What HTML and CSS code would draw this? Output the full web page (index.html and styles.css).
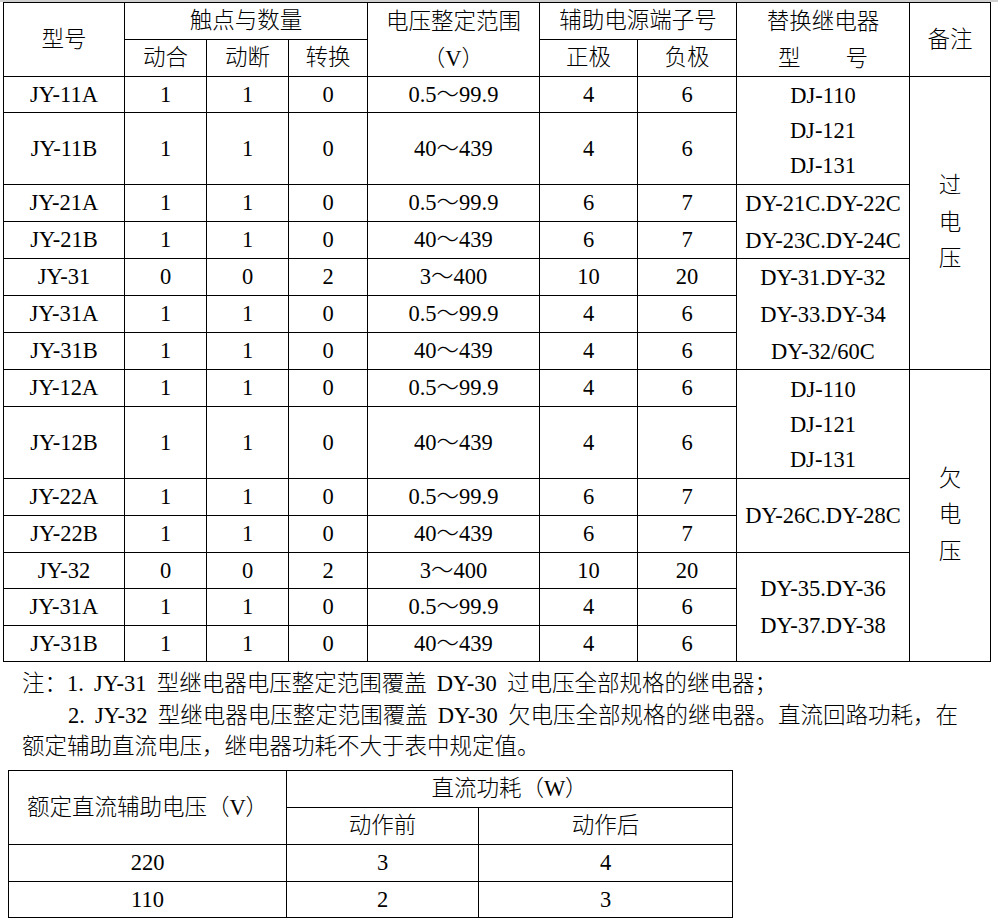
FILE: index.html
```html
<!DOCTYPE html>
<html lang="zh-CN">
<head>
<meta charset="utf-8">
<title>JY 系列电压继电器规格</title>
<link rel="stylesheet" href="styles.css">
</head>
<body>
<div class="topbar"></div>
<div class="spec">
  <div class="r2">型号</div>
  <div class="c3">触点与数量</div>
  <div class="r2 two">电压整定范围<br>（V）</div>
  <div class="c2">辅助电源端子号</div>
  <div class="r2 two">替换继电器<br>型　　号</div>
  <div class="r2">备注</div>

  <div>动合</div><div>动断</div><div>转换</div><div>正极</div><div>负极</div>

  <div>JY-11A</div><div>1</div><div>1</div><div>0</div><div>0.5～99.9</div><div>4</div><div>6</div>
  <div class="r3 dj">DJ-110<br>DJ-121<br>DJ-131</div>
  <div class="r8 remark">过<br>电<br>压</div>

  <div class="r2">JY-11B</div><div class="r2">1</div><div class="r2">1</div><div class="r2">0</div><div class="r2">40～439</div><div class="r2">4</div><div class="r2">6</div>

  <div>JY-21A</div><div>1</div><div>1</div><div>0</div><div>0.5～99.9</div><div>6</div><div>7</div>
  <div class="r2 dy">DY-21C.DY-22C<br>DY-23C.DY-24C</div>
  <div>JY-21B</div><div>1</div><div>1</div><div>0</div><div>40～439</div><div>6</div><div>7</div>

  <div>JY-31</div><div>0</div><div>0</div><div>2</div><div>3～400</div><div>10</div><div>20</div>
  <div class="r3 dy">DY-31.DY-32<br>DY-33.DY-34<br>DY-32/60C</div>
  <div>JY-31A</div><div>1</div><div>1</div><div>0</div><div>0.5～99.9</div><div>4</div><div>6</div>
  <div>JY-31B</div><div>1</div><div>1</div><div>0</div><div>40～439</div><div>4</div><div>6</div>

  <div>JY-12A</div><div>1</div><div>1</div><div>0</div><div>0.5～99.9</div><div>4</div><div>6</div>
  <div class="r3 dj">DJ-110<br>DJ-121<br>DJ-131</div>
  <div class="r8 remark">欠<br>电<br>压</div>

  <div class="r2">JY-12B</div><div class="r2">1</div><div class="r2">1</div><div class="r2">0</div><div class="r2">40～439</div><div class="r2">4</div><div class="r2">6</div>

  <div>JY-22A</div><div>1</div><div>1</div><div>0</div><div>0.5～99.9</div><div>6</div><div>7</div>
  <div class="r2">DY-26C.DY-28C</div>
  <div>JY-22B</div><div>1</div><div>1</div><div>0</div><div>40～439</div><div>6</div><div>7</div>

  <div>JY-32</div><div>0</div><div>0</div><div>2</div><div>3～400</div><div>10</div><div>20</div>
  <div class="r3 dy">DY-35.DY-36<br>DY-37.DY-38</div>
  <div>JY-31A</div><div>1</div><div>1</div><div>0</div><div>0.5～99.9</div><div>4</div><div>6</div>
  <div>JY-31B</div><div>1</div><div>1</div><div>0</div><div>40～439</div><div>4</div><div>6</div>
</div>

<div class="notes">
  <p>注：1. JY-31 型继电器电压整定范围覆盖 DY-30 过电压全部规格的继电器；</p>
  <p class="indent">2. JY-32 型继电器电压整定范围覆盖 DY-30 欠电压全部规格的继电器。直流回路功耗，在<br>额定辅助直流电压，继电器功耗不大于表中规定值。</p>
</div>

<div class="power">
  <div class="r2">额定直流辅助电压（V）</div>
  <div class="c2">直流功耗（W）</div>
  <div>动作前</div><div>动作后</div>
  <div>220</div><div>3</div><div>4</div>
  <div>110</div><div>2</div><div>3</div>
</div>
</body>
</html>
```

FILE: styles.css
```css
html, body {
  margin: 0;
  padding: 0;
  background: #fff;
}

body {
  color: #000;
  font-family: "Liberation Serif", "Noto Sans CJK SC", serif;
  font-size: 22.5px;
  font-weight: 300;
  line-height: 36px;
}

.topbar {
  height: 2px;
  background: #cfcfcf;
}

.spec,
.power {
  display: grid;
  width: max-content;
  background: #000;
  padding: 1px;
  gap: 1px;
}

.spec {
  margin-left: 3px;
  grid-template-columns: 120px 81px 81px 78px 171px 97px 98px 172px 80px;
  grid-template-rows: 36px 36px 35px 35px 35px 36px 36px 36px 36px 36px 36px 35px 35px 36px 36px 35px 36px 35px;
}

.power {
  margin-left: 8px;
  grid-template-columns: 277px 191px 253px;
  grid-template-rows: 36px 36px 36px 35px;
}

.spec > div,
.power > div {
  background: #fff;
  display: flex;
  align-items: center;
  justify-content: center;
  text-align: center;
  white-space: nowrap;
}

.r2 { grid-row: span 2; }
.r3 { grid-row: span 3; }
.r8 { grid-row: span 8; }
.c2 { grid-column: span 2; }
.c3 { grid-column: span 3; }

.spec > .two { line-height: 37px; }
.spec > .dj { line-height: 35px; }
.spec > .dy { line-height: 37px; }
.spec > .remark { line-height: 36.5px; }

.notes {
  margin: 6px 0 7.5px 22px;
  line-height: 31.5px;
  word-spacing: 4.5px;
}

.notes p {
  margin: 0;
}

.notes .indent {
  text-indent: 46px;
}
```
